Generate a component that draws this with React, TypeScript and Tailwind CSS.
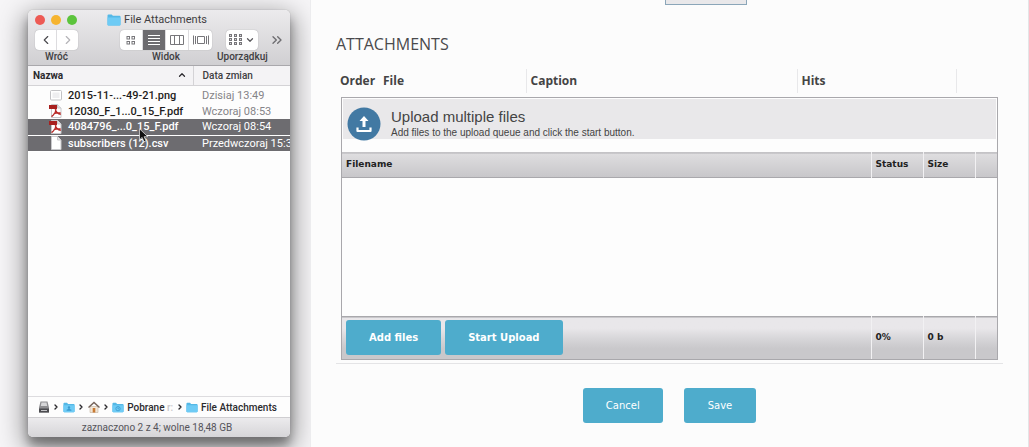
import { clsx } from 'clsx';
import { ChevronDown, ChevronLeft, ChevronRight, ChevronUp, ChevronsRight } from 'lucide-react';
import { ReactNode } from 'react';

type FileKind = 'image' | 'pdf' | 'plain';

interface FinderFile {
  name: string;
  modified: string;
  kind: FileKind;
  selected?: boolean;
}

const files: FinderFile[] = [
  { name: '2015-11-...-49-21.png', modified: 'Dzisiaj 13:49', kind: 'image' },
  { name: '12030_F_1...0_15_F.pdf', modified: 'Wczoraj 08:53', kind: 'pdf' },
  { name: '4084796_...0_15_F.pdf', modified: 'Wczoraj 08:54', kind: 'pdf', selected: true },
  { name: 'subscribers (12).csv', modified: 'Przedwczoraj 15:3', kind: 'plain', selected: true },
];

function FolderIcon({ mark, className }: { mark?: 'person' | 'clock'; className?: string }) {
  return (
    <svg
      viewBox="0 0 14 12"
      className={clsx('shrink-0', className)}
    >
      <path
        d="M0.5 1.5q0-1 1-1h3.2l1.2 1.3h6.6q1 0 1 1v7.7q0 1-1 1h-11q-1 0-1-1z"
        fill="#54b8e6"
      />
      <path
        d="M0.5 3.4h13v7.1q0 1-1 1h-11q-1 0-1-1z"
        fill="#6ecbf5"
      />
      {mark === 'person' && (
        <path
          d="M7 4.4a1.4 1.4 0 0 1 .8 2.6v.8l2 .9v1h-5.6v-1l2-.9v-.8A1.4 1.4 0 0 1 7 4.4z"
          fill="#3a9bd0"
        />
      )}
      {mark === 'clock' && (
        <path
          d="M7 4.9a2.5 2.5 0 1 1 0 5a2.5 2.5 0 1 1 0-5M7 6v1.6h1"
          fill="none"
          stroke="#3a9bd0"
        />
      )}
    </svg>
  );
}

function FileIcon({ kind }: { kind: FileKind }) {
  if (kind === 'image') {
    return (
      <svg
        viewBox="0 0 14 14"
        className="size-[14px] shrink-0"
      >
        <rect
          x="1.5"
          y="2.5"
          width="11"
          height="9.5"
          rx="1"
          fill="#fff"
          stroke="#c2c2c5"
        />
        <path
          d="M3.5 4.5h7v5.5h-7z"
          fill="#eeeef0"
        />
      </svg>
    );
  }

  return (
    <svg
      viewBox="0 0 14 14"
      className="size-[14px] shrink-0"
    >
      <path
        d="M2.5.5h6l3.5 3.5v9.5h-9.5z"
        fill="#fff"
        stroke="#c9c9cc"
      />
      <path
        d="M8.5.5v3.5h3.5"
        fill="#e4e4e6"
        stroke="#c9c9cc"
      />
      {kind === 'pdf' && (
        <>
          <path
            d="M0 1h8v4h-8z"
            fill="#a8201f"
          />
          <path
            d="M6.2 5.2c.8 2.7 2.4 4.5 5.6 5.2M6.8 5c.2 3-1.8 5.8-4.3 7.6M4.6 10c2-1.2 4.2-1.5 7-1"
            fill="none"
            stroke="#b92a28"
            strokeWidth="1.3"
          />
        </>
      )}
    </svg>
  );
}

function DriveIcon() {
  return (
    <svg
      viewBox="0 0 12 12"
      className="size-3 shrink-0"
    >
      <path
        d="M2.5.5h7l1.5 6v5h-10v-5z"
        fill="#8d8d90"
      />
      <path
        d="M3.5 1.5h5l.7 3.5h-6.4z"
        fill="#d6d6d8"
      />
      <path
        d="M1 7.5h10v4h-10z"
        fill="#4c4c50"
      />
      <path
        d="M3 9h6v1h-6z"
        fill="#c5c5c8"
      />
    </svg>
  );
}

function HomeIcon() {
  return (
    <svg
      viewBox="0 0 12 12"
      className="size-3 shrink-0"
    >
      <path
        d="M2 5.5h8v6h-8z"
        fill="#f1e6d8"
        stroke="#b9a58f"
        strokeWidth=".5"
      />
      <path
        d="M.5 6.5l5.5-5 5.5 5"
        fill="none"
        stroke="#76655c"
        strokeWidth="1.5"
      />
      <path
        d="M4.7 7h2.6v4.5h-2.6z"
        fill="#c97a32"
      />
    </svg>
  );
}

function GridIcon() {
  return (
    <svg
      viewBox="0 0 10 10"
      className="size-[10px]"
      fill="none"
      stroke="#77767a"
    >
      <rect x="1" y="1.5" width="2.5" height="2.5" />
      <rect x="6" y="1.5" width="2.5" height="2.5" />
      <rect x="1" y="6.5" width="2.5" height="2.5" />
      <rect x="6" y="6.5" width="2.5" height="2.5" />
    </svg>
  );
}

function ListIcon() {
  return (
    <svg
      viewBox="0 0 12 10"
      className="h-[10px] w-3"
      stroke="#fff"
    >
      <path d="M0 .5h12M0 3.5h12M0 6.5h12M0 9.5h12" />
    </svg>
  );
}

function ColumnsIcon() {
  return (
    <svg
      viewBox="0 0 14 10"
      className="h-[10px] w-[14px]"
      fill="none"
      stroke="#77767a"
    >
      <path d="M.5 .5h13v9h-13zM4.5 .5v9M9.5 .5v9" />
    </svg>
  );
}

function CoverFlowIcon() {
  return (
    <svg
      viewBox="0 0 16 10"
      className="h-[10px] w-4"
      fill="none"
      stroke="#77767a"
    >
      <path d="M4.5 1.5h7v7h-7zM.5 .5v9M2.5 1v8M13.5 1v8M15.5 .5v9" />
    </svg>
  );
}

function ArrangeIcon() {
  return (
    <svg
      viewBox="0 0 13 12"
      className="h-3 w-[13px]"
      fill="#d9d8db"
      stroke="#77767a"
    >
      {[0.5, 4.5, 8.5].map((y) =>
        [0.5, 5.5, 10.5].map((x) => (
          <rect
            key={`${x}-${y}`}
            x={x}
            y={y}
            width="2"
            height="2"
          />
        ))
      )}
    </svg>
  );
}

const viewModes = [
  { label: 'Ikony', icon: <GridIcon /> },
  { label: 'Lista', icon: <ListIcon />, active: true },
  { label: 'Kolumny', icon: <ColumnsIcon /> },
  { label: 'Cover Flow', icon: <CoverFlowIcon /> },
];

function ToolGroup({ label, children }: { label: string; children: ReactNode }) {
  return (
    <div className="flex flex-col items-center">
      <div className="flex h-5 divide-x divide-[#dddcdf] overflow-hidden rounded-[4px] bg-white shadow-[0_0_1px_#8e8d91]">
        {children}
      </div>
      <span className="text-[10px] font-medium leading-[14px] text-[#3f3e42]">{label}</span>
    </div>
  );
}

function Toolbar() {
  return (
    <header className="h-[56px] shrink-0 border-b border-[#a9a8ac] bg-linear-to-b from-[#ecebed] to-[#d0cfd2]">
      <div className="relative flex h-5 items-center justify-center">
        <div className="absolute left-[7px] flex gap-[6px]">
          <button
            type="button"
            aria-label="Zamknij"
            className="size-[10px] rounded-full bg-[#ed5a54]"
          />
          <button
            type="button"
            aria-label="Zminimalizuj"
            className="size-[10px] rounded-full bg-[#f6b42f]"
          />
          <button
            type="button"
            aria-label="Powiększ"
            className="size-[10px] rounded-full bg-[#5cc43c]"
          />
        </div>
        <h1 className="flex items-center gap-[3px] pr-1 text-[11px] text-[#3f3e42]">
          <FolderIcon className="h-3 w-[14px]" />
          File Attachments
        </h1>
      </div>
      <div className="flex items-start pl-[7px]">
        <ToolGroup label="Wróć">
          <button
            type="button"
            aria-label="Wstecz"
            className="flex w-[22px] items-center justify-center text-[#4c4b4f]"
          >
            <ChevronLeft size={14} />
          </button>
          <button
            type="button"
            aria-label="Dalej"
            className="flex w-[21px] items-center justify-center text-[#b5b4b8]"
          >
            <ChevronRight size={14} />
          </button>
        </ToolGroup>
        <div className="ml-[42px] mr-[5px]">
          <ToolGroup label="Widok">
            {viewModes.map((mode) => (
              <button
                key={mode.label}
                type="button"
                aria-label={mode.label}
                aria-pressed={Boolean(mode.active)}
                className={clsx(
                  'flex w-[23px] items-center justify-center',
                  mode.active && 'bg-[#6d6c70]'
                )}
              >
                {mode.icon}
              </button>
            ))}
          </ToolGroup>
        </div>
        <ToolGroup label="Uporządkuj">
          <button
            type="button"
            aria-label="Uporządkuj"
            className="flex w-8 items-center justify-center gap-[3px] text-[#5a595d]"
          >
            <ArrangeIcon />
            <ChevronDown
              size={10}
              strokeWidth={3}
            />
          </button>
        </ToolGroup>
        <button
          type="button"
          aria-label="Więcej"
          className="ml-px flex h-5 items-center text-[#6d6c70]"
        >
          <ChevronsRight
            size={16}
            strokeWidth={2}
          />
        </button>
      </div>
    </header>
  );
}

function FileTable() {
  return (
    <table className="w-full table-fixed border-collapse text-left text-[11px]">
      <thead>
        <tr className="h-[19px] border-b border-[#d4d3d6] bg-[#f4f3f5]">
          <th className="w-[165px] border-r border-[#d4d3d6] px-[5px] py-0 text-[10px] font-bold text-[#2b2a2e]">
            <div className="flex items-center justify-between">
              Nazwa
              <ChevronUp
                size={10}
                strokeWidth={3}
                className="mr-[1px]"
              />
            </div>
          </th>
          <th className="py-0 pl-[9px] text-[10px] font-medium text-[#3f3e42]">Data zmian</th>
        </tr>
      </thead>
      <tbody>
        <tr className="h-[2px]">
          <td colSpan={2} />
        </tr>
        {files.map((file) => (
          <tr
            key={file.name}
            className={clsx(
              'h-4 leading-[15px]',
              file.selected ? 'border-b border-white bg-[#6d6c70] text-white' : 'text-[#1d1c20]'
            )}
          >
            <td className="p-0 pl-[21px] font-medium">
              <div className="flex items-center gap-[5px] whitespace-nowrap">
                <FileIcon kind={file.kind} />
                {file.name}
              </div>
            </td>
            <td
              className={clsx(
                'whitespace-nowrap p-0 pl-[9px]',
                !file.selected && 'text-[#858488]'
              )}
            >
              {file.modified}
            </td>
          </tr>
        ))}
      </tbody>
    </table>
  );
}

function PathSeparator() {
  return (
    <ChevronRight
      size={8}
      strokeWidth={4}
      className="shrink-0 text-[#2b2a2e]"
    />
  );
}

function FinderWindow() {
  return (
    <section className="relative flex flex-1 flex-col overflow-hidden rounded-[5px] bg-[#fdfdfd] font-['Roboto','Liberation_Sans',sans-serif] shadow-[0_0_1px_#88878b,0_8px_10px_#00000050,0_8px_26px_4px_#00000068]">
      <Toolbar />
      <FileTable />
      <nav className="mt-auto flex h-[21px] items-center justify-between whitespace-nowrap border-t border-[#dddcdf] pl-[10px] pr-[13px] text-[10px] font-medium text-[#2b2a2e]">
        <DriveIcon />
        <PathSeparator />
        <FolderIcon
          mark="person"
          className="h-[11px] w-3"
        />
        <PathSeparator />
        <HomeIcon />
        <PathSeparator />
        <span className="flex items-center gap-[3px]">
          <FolderIcon
            mark="clock"
            className="h-[11px] w-3"
          />
          <span>
            Pobrane <span className="text-[#c9c8cb]">r:</span>
          </span>
        </span>
        <PathSeparator />
        <span className="flex items-center gap-[3px]">
          <FolderIcon className="h-[11px] w-3" />
          File Attachments
        </span>
      </nav>
      <footer className="flex h-5 shrink-0 items-center justify-center border-t border-[#cfced1] bg-linear-to-b from-[#ecebed] to-[#d6d5d8] pr-1 text-[10px] text-[#55545a]">
        zaznaczono 2 z 4; wolne 18,48 GB
      </footer>
      <svg
        viewBox="0 0 10 15"
        className="absolute left-[111px] top-[118px] h-[15px] w-[10px]"
      >
        <path
          d="M.5 .8v11l2.6-2.4 1.9 4.3 2-.9-1.9-4.1h3.7z"
          fill="#111"
          stroke="#eee"
          strokeWidth=".7"
        />
      </svg>
    </section>
  );
}

function UploadQueue() {
  return (
    <section className="border border-[#a9a8ac] bg-[#fdfdfd]">
      <div className="m-px mb-[13px] flex h-10 items-center gap-[10px] bg-[#e9e8ea] pl-[4px] pt-[10px]">
        <svg
          viewBox="0 0 34 34"
          className="size-[34px] shrink-0"
        >
          <circle
            cx="17"
            cy="17"
            r="16.5"
            fill="#4279a3"
          />
          <path
            d="M17 9l4.5 5h-3v6h-3v-6h-3z"
            fill="#fff"
          />
          <path
            d="M10.5 20.5v3.5h13v-3.5"
            fill="none"
            stroke="#fff"
            strokeWidth="2.2"
            strokeLinejoin="round"
          />
        </svg>
        <div className="font-['Liberation_Sans',Arial,sans-serif] text-[#444]">
          <h3 className="text-[15px] leading-[18px]">Upload multiple files</h3>
          <p className="text-[10px] leading-[14px]">
            Add files to the upload queue and click the start button.
          </p>
        </div>
      </div>
      <table className="w-full table-fixed border-collapse text-left font-['DejaVu_Sans',Verdana,sans-serif] text-[9px] text-[#222]">
        <colgroup>
          <col />
          <col className="w-[52px]" />
          <col className="w-[52px]" />
          <col className="w-[22px]" />
        </colgroup>
        <thead>
          <tr className="h-[25px] border-y border-b-[#a9a8ac] border-t-[#c4c3c6] bg-linear-to-b from-[#dedddf] to-[#c8c7ca]">
            <th className="px-1 py-0">Filename</th>
            <th className="border-l border-[#f2f1f3] px-1 py-0">Status</th>
            <th className="border-l border-[#f2f1f3] px-1 py-0">Size</th>
            <th className="border-l border-[#f2f1f3] p-0" />
          </tr>
        </thead>
        <tbody>
          <tr className="h-[139px]">
            <td colSpan={4} />
          </tr>
        </tbody>
        <tfoot>
          <tr className="h-[42px] border-t border-[#a9a8ac] bg-linear-to-b from-[#e9e7ea] from-25% via-[#d7d6d9] via-50% to-[#c9c8cb] to-75% font-bold">
            <td className="px-1 py-0">
              <div className="flex gap-1">
                <button
                  type="button"
                  className="h-[35px] rounded-[3px] bg-[#4eaccc] px-[23px] text-[10px] text-white"
                >
                  Add files
                </button>
                <button
                  type="button"
                  className="h-[35px] rounded-[3px] bg-[#4eaccc] px-[23px] text-[10px] text-white"
                >
                  Start Upload
                </button>
              </div>
            </td>
            <td className="border-l border-[#f2f1f3] px-1 py-0">0%</td>
            <td className="border-l border-[#f2f1f3] px-1 py-0">0 b</td>
            <td className="border-l border-[#f2f1f3] p-0" />
          </tr>
        </tfoot>
      </table>
    </section>
  );
}

export default function App() {
  return (
    <div className="flex min-h-screen bg-[#fcfcfc]">
      <aside className="flex w-[311px] shrink-0 overflow-hidden border-r border-[#ececee] bg-[#f6f5f7] py-[10px] pl-[28px] pr-5">
        <FinderWindow />
      </aside>
      <main className="flex min-w-0 flex-1 flex-col border-r border-[#e4e4e6] px-[25px] font-['Open_Sans','Noto_Sans',sans-serif]">
        <button
          type="button"
          aria-label="Browse"
          className="ml-[329px] h-[5px] w-[82px] border border-t-0 border-[#8ba6b9] bg-[#e9e8ea]"
        />
        <h2 className="mt-[27px] text-[16px] leading-6 text-[#4a4a4c]">ATTACHMENTS</h2>
        <table className="mt-[13px] w-full table-fixed border-collapse border-b border-[#e4e4e6] text-left">
          <thead>
            <tr className="h-6 text-[12px] leading-4 text-[#444]">
              <th className="w-[43px] px-1 py-0">Order</th>
              <th className="w-[147px] px-1 py-0">File</th>
              <th className="w-[271px] border-l border-[#e8e8ea] px-1 py-0">Caption</th>
              <th className="border-l border-[#e8e8ea] px-1 py-0">Hits</th>
              <th className="w-[47px] border-l border-[#e8e8ea] p-0" />
            </tr>
          </thead>
          <tbody>
            <tr>
              <td
                colSpan={5}
                className="px-[5px] pb-[3px] pt-1"
              >
                <UploadQueue />
              </td>
            </tr>
          </tbody>
        </table>
        <div className="mt-6 flex justify-center gap-[21px] text-[10px] text-white">
          <button
            type="button"
            className="h-[35px] rounded-[3px] bg-[#4eaccc] px-[23px] font-['DejaVu_Sans',Verdana,sans-serif]"
          >
            Cancel
          </button>
          <button
            type="button"
            className="h-[35px] rounded-[3px] bg-[#4eaccc] px-6 font-['DejaVu_Sans',Verdana,sans-serif]"
          >
            Save
          </button>
        </div>
      </main>
    </div>
  );
}
